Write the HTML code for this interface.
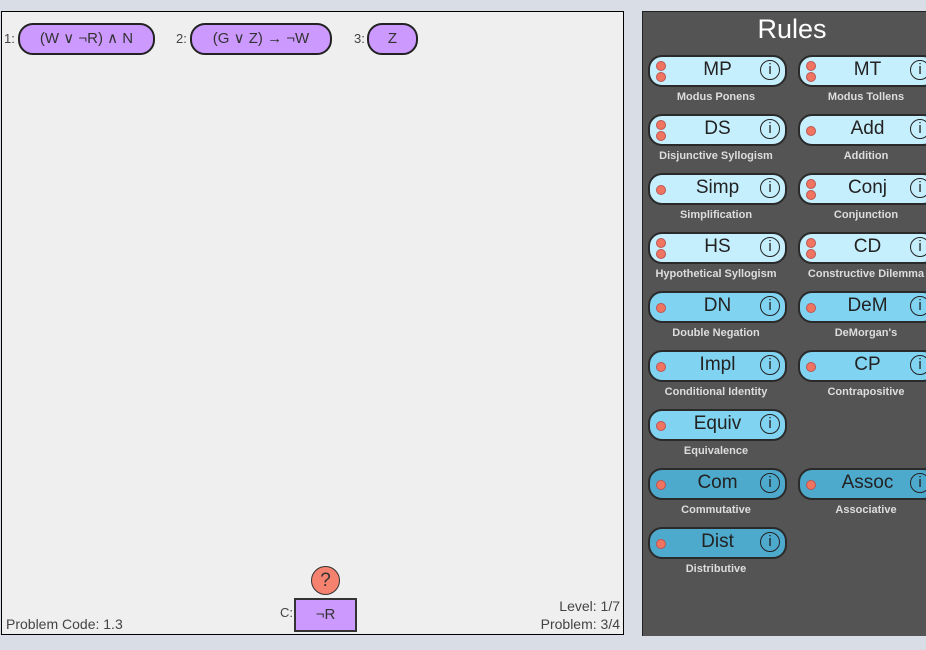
<!DOCTYPE html>
<html><head><meta charset="utf-8"><style>
body{margin:0;width:926px;height:650px;background:#d8dde6;overflow:hidden;font-family:"Liberation Sans",sans-serif;position:relative}
.a{position:absolute}
#left{left:1px;top:11px;width:621px;height:622px;background:#efefef;border:1px solid #000}
#right{left:642px;top:11px;width:300px;height:624px;background:#545454;border-left:1px solid #222;border-top:1px solid #222}
.pill{position:absolute;height:28px;border:2px solid #222;border-radius:15px;background:#cc99ff;font-size:15px;color:#333;text-align:center;line-height:28px;box-sizing:content-box}
.lbl{position:absolute;font-size:13px;color:#444}
.btn{position:absolute;width:135px;height:28px;border:2px solid #2a2a2a;border-radius:14px;font-size:19px;color:#222;text-align:center;line-height:25px}
.btn .i{position:absolute;left:110px;top:3px;width:18px;height:18px;border:1.5px solid #222;border-radius:50%;font-size:15px;line-height:18px;text-align:center}
.btn .d{position:absolute;left:6px;width:8px;height:8px;border-radius:50%;background:#f07560;border:1px solid #b55}
.cap{position:absolute;width:140px;text-align:center;font-size:11px;font-weight:bold;color:#ddd}
</style></head><body>
<div id="left" class="a"></div>
<div id="right" class="a"></div>
<div class="lbl" style="left:4px;top:31px">1:</div>
<div class="pill" style="left:18px;top:23px;width:133px">(W ∨ ¬R) ∧ N</div>
<div class="lbl" style="left:176px;top:31px">2:</div>
<div class="pill" style="left:190px;top:23px;width:138px">(G ∨ Z) → ¬W</div>
<div class="lbl" style="left:354px;top:31px">3:</div>
<div class="pill" style="left:367px;top:23px;width:47px">Z</div>
<div class="a" style="left:311px;top:566px;width:27px;height:27px;border:1.5px solid #333;border-radius:50%;background:#f4826e;text-align:center;line-height:27px;font-size:19px;color:#333">?</div>
<div class="lbl" style="left:280px;top:605px">C:</div>
<div class="a" style="left:294px;top:598px;width:59px;height:30px;border:2px solid #333;background:#cc99ff;text-align:center;line-height:30px;font-size:15px;color:#333">¬R</div>
<div class="lbl" style="left:6px;top:616px;font-size:14px">Problem Code: 1.3</div>
<div class="lbl" style="left:520px;top:597px;width:100px;text-align:right;font-size:14px;line-height:18px">Level: 1/7<br>Problem: 3/4</div>
<div class="a" style="left:642px;top:14px;width:300px;text-align:center;font-size:27px;color:#fff">Rules</div>
<div id="rules"></div>
<script>
var R=[["MP","Modus Ponens",2,0,"#c6effd"],["MT","Modus Tollens",2,1,"#c6effd"],
["DS","Disjunctive Syllogism",2,0,"#c6effd"],["Add","Addition",1,1,"#c6effd"],
["Simp","Simplification",1,0,"#c6effd"],["Conj","Conjunction",2,1,"#c6effd"],
["HS","Hypothetical Syllogism",2,0,"#c6effd"],["CD","Constructive Dilemma",2,1,"#c6effd"],
["DN","Double Negation",1,0,"#80d3f1"],["DeM","DeMorgan's",1,1,"#80d3f1"],
["Impl","Conditional Identity",1,0,"#80d3f1"],["CP","Contrapositive",1,1,"#80d3f1"],
["Equiv","Equivalence",1,0,"#80d3f1"],null,
["Com","Commutative",1,0,"#4eaacd"],["Assoc","Associative",1,1,"#4eaacd"],
["Dist","Distributive",1,0,"#4eaacd"]];
var h="";
R.forEach(function(r,k){if(!r)return;var row=Math.floor(k/2),x=r[3]?798:648,y=55+row*59;
var d=r[2]==2?'<div class="d" style="top:4px"></div><div class="d" style="top:15px"></div>':'<div class="d" style="top:10px"></div>';
h+='<div class="btn" style="left:'+x+'px;top:'+y+'px;background:'+r[4]+'">'+d+r[0]+'<div class="i">i</div></div>';
h+='<div class="cap" style="left:'+(x-2)+'px;top:'+(y+36)+'px">'+r[1]+'</div>';});
document.getElementById("rules").innerHTML=h;
</script>
</body></html>
